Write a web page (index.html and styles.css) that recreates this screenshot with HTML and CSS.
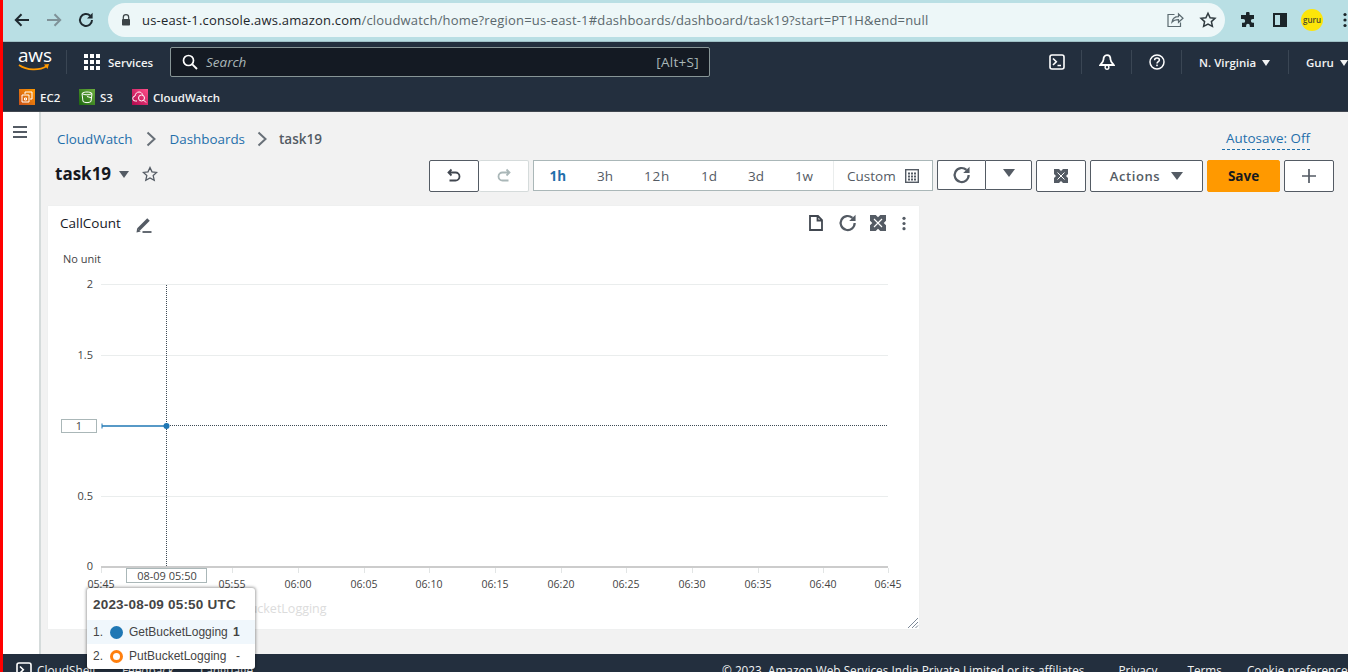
FILE: index.html
```html
<!DOCTYPE html>
<html lang="en">
<head>
<meta charset="utf-8">
<title>task19 | CloudWatch</title>
<link rel="stylesheet" href="styles.css">
</head>
<body>
<div class="browser">
  <header class="chrome">
    <svg class="ch-ic" viewBox="0 0 18 18"><path d="M16 9H3M8.500 3.200 2.800 9l5.700 5.800" fill="none" stroke="#1f2a30" stroke-width="2"/></svg>
    <svg class="ch-ic" viewBox="0 0 18 18"><path d="M2 9h13M9.500 3.200 15.200 9l-5.700 5.800" fill="none" stroke="#7f9298" stroke-width="2"/></svg>
    <svg class="ch-ic" viewBox="0 0 18 18"><path d="M15 9a6 6 0 1 1-1.800-4.300" fill="none" stroke="#1f2a30" stroke-width="2"/><path d="M15.600 1.800v5.600H10z" fill="#1f2a30"/></svg>
    <div class="omnibox">
      <svg class="lock" viewBox="0 0 10 12"><path d="M2.300 5V3.400a2.700 2.700 0 0 1 5.400 0V5" fill="none" stroke="#3c4447" stroke-width="1.200"/><rect x="1" y="5" width="8" height="6.600" rx=".8" fill="#3c4447"/></svg>
      <span class="url"><span class="url-host">us-east-1.console.aws.amazon.com</span>/cloudwatch/home?region=us-east-1#dashboards/dashboard/task19?start=PT1H&amp;end=null</span>
      <svg class="omni-ic" viewBox="0 0 18 18"><path d="M8.500 3.500H2v12h12.500v-4M6 11c.6-3.500 3-5.300 6.500-5.300V3l4.500 4.200-4.500 4.100V8.700C9.500 8.700 7.500 9.300 6 11z" fill="none" stroke="#5b6a70" stroke-width="1.200"/></svg>
      <svg class="omni-ic star" viewBox="0 0 18 18"><path d="m9 2.200 2.100 4.500 4.900.6-3.600 3.300 1 4.800L9 13l-4.400 2.400 1-4.800L2 7.300l4.900-.6z" fill="none" stroke="#2f3a3f" stroke-width="1.500"/></svg>
    </div>
    <svg class="ext" viewBox="0 0 16 16"><path d="M6 1.500a1.800 1.800 0 0 1 3.600 0V3H14v4h-1.300a1.800 1.800 0 0 0 0 3.700H14V15H9.800v-1.300a1.800 1.800 0 0 0-3.700 0V15H2v-4.200h1.300a1.800 1.800 0 0 0 0-3.700H1V3h5z" fill="#1b2529"/></svg>
    <svg class="side" viewBox="0 0 14 14"><rect x="1" y="1" width="12" height="12" fill="none" stroke="#1b2529" stroke-width="2"/><rect x="7" y="1" width="6" height="12" fill="#1b2529"/></svg>
    <div class="avatar">guru</div>
    <svg class="kebab" viewBox="0 0 4 16"><circle cx="2" cy="2.500" r="1.600"/><circle cx="2" cy="8" r="1.600"/><circle cx="2" cy="13.500" r="1.600"/></svg>
  </header>

  <nav class="aws-nav">
    <div class="nav-top">
      <div class="logo">
        <span class="logo-text">aws</span>
        <svg class="smile" viewBox="0 0 32 8"><path d="M1 1c8 5.500 20 6 28 1" fill="none" stroke="#f90" stroke-width="1.800"/><path d="m26 .6 5-.6-1.500 5z" fill="#f90"/></svg>
      </div>
      <span class="nav-sep sep-logo"></span>
      <svg class="grid-ic" viewBox="0 0 16 16" fill="#fff"><rect width="4" height="4"/><rect x="6" width="4" height="4"/><rect x="12" width="4" height="4"/><rect y="6" width="4" height="4"/><rect x="6" y="6" width="4" height="4"/><rect x="12" y="6" width="4" height="4"/><rect y="12" width="4" height="4"/><rect x="6" y="12" width="4" height="4"/><rect x="12" y="12" width="4" height="4"/></svg>
      <span class="services">Services</span>
      <div class="search">
        <svg class="search-ic" viewBox="0 0 16 16"><circle cx="6.500" cy="6.500" r="5" fill="none" stroke="#fff" stroke-width="1.700"/><path d="m10.300 10.300 4.700 4.700" stroke="#fff" stroke-width="1.900"/></svg>
        <span class="search-ph">Search</span>
        <span class="search-key">[Alt+S]</span>
      </div>
      <div class="nav-right">
        <svg class="nav-ic" viewBox="0 0 16 16"><rect x="1" y="1" width="14" height="14" rx="2" fill="none" stroke="#fff" stroke-width="1.600"/><path d="m4 4.500 3.300 3.300L4 11M8.500 11.500H12" fill="none" stroke="#fff" stroke-width="1.600"/></svg>
        <span class="nav-sep"></span>
        <svg class="nav-ic" viewBox="0 0 16 16"><path d="M8 1.200c2.500 0 3.500 2 3.500 4.300 0 2 2.500 4.500 3.200 5.500H1.300C2 10 4.500 7.500 4.500 5.500 4.500 3.200 5.500 1.200 8 1.200z" fill="none" stroke="#fff" stroke-width="1.800"/><circle cx="8" cy="13.300" r="1.900" fill="none" stroke="#fff" stroke-width="1.400"/></svg>
        <span class="nav-sep"></span>
        <svg class="nav-ic" viewBox="0 0 16 16"><circle cx="8" cy="8" r="7" fill="none" stroke="#fff" stroke-width="1.500"/><path d="M5.600 6.200C5.600 4.700 6.800 4 8 4c1.400 0 2.400.8 2.400 2 0 1.700-2.400 1.700-2.400 3.600" fill="none" stroke="#fff" stroke-width="1.500"/><rect x="7.200" y="10.600" width="1.600" height="1.600" fill="#fff"/></svg>
        <span class="nav-sep"></span>
        <span class="region">N. Virginia<i class="caret-w"></i></span>
        <span class="nav-sep"></span>
        <span class="user">Guru<i class="caret-w"></i></span>
      </div>
    </div>
    <div class="favs">
      <span class="fav fav-ec2"><span class="svc svc-ec2"><svg viewBox="0 0 16 16"><path d="M6 5V3h7v7h-2M3 6h7v7H3zM5.500 9h2v2h-2z" fill="none" stroke="#fff" stroke-width="1"/></svg></span>EC2</span>
      <span class="fav fav-s3"><span class="svc svc-s3"><svg viewBox="0 0 16 16"><path d="M3 4.500c2-2 8-2 10 0l-1 8c-2 1.500-6 1.500-8 0zM3 4.500c2 1.800 8 1.800 10 0M8 7.500l5 1.500" fill="none" stroke="#fff" stroke-width="1"/></svg></span>S3</span>
      <span class="fav"><span class="svc svc-cw"><svg viewBox="0 0 16 16"><path d="M5 12H3.500a2.500 2.500 0 0 1-.5-5c.3-2.500 2-4 4-4 1.800 0 3 1 3.700 2.700" fill="none" stroke="#fff" stroke-width="1"/><circle cx="9.500" cy="9" r="3" fill="none" stroke="#fff"/><path d="m11.700 11.200 2.300 2.300" stroke="#fff"/></svg></span>CloudWatch</span>
    </div>
  </nav>

  <div class="app">
    <aside class="sidebar">
      <span class="burger"><i></i><i></i><i></i></span>
    </aside>
    <main class="content">
      <div class="crumbs">
        <a class="crumb">CloudWatch</a>
        <svg class="chev" viewBox="0 0 10 16"><path d="m1.500 1.500 7 6.500-7 6.500" fill="none" stroke="#687078" stroke-width="2"/></svg>
        <a class="crumb">Dashboards</a>
        <svg class="chev chev-last" viewBox="0 0 10 16"><path d="m1.500 1.500 7 6.500-7 6.500" fill="none" stroke="#687078" stroke-width="2"/></svg>
        <span class="crumb-cur">task19</span>
        <a class="autosave">Autosave: Off</a>
      </div>
      <div class="toolbar">
        <div class="title-group">
          <h1 class="dash-title">task19</h1>
          <i class="caret-g title-caret"></i>
          <svg class="fav-star" viewBox="0 0 16 16"><path d="m8 1.500 2 4.300 4.700.6-3.500 3.200 1 4.600L8 11.900l-4.200 2.300 1-4.600L1.300 6.400 6 5.800z" fill="none" stroke="#545b64" stroke-width="1.300"/></svg>
        </div>
        <div class="tools">
          <button class="btn b-undo"><svg class="ic16" viewBox="0 0 16 16"><path d="M5.500 1.500 2.500 4.500l3 3M3 4.500h6.500a4 4 0 0 1 0 8H3.500" fill="none" stroke="#414750" stroke-width="1.800"/></svg></button>
          <button class="btn b-redo"><svg class="ic16" viewBox="0 0 16 16"><path d="m10.500 1.500 3 3-3 3M13 4.500H6.500a4 4 0 0 0 0 8h6" fill="none" stroke="#aab7b8" stroke-width="1.800"/></svg></button>
          <div class="range">
            <span class="r r-on">1h</span><span class="r">3h</span><span class="r r-12">12h</span><span class="r">1d</span><span class="r">3d</span><span class="r">1w</span>
            <span class="r-custom">Custom
              <svg class="cal" viewBox="0 0 14 14"><rect x=".7" y=".7" width="12.600" height="12.600" fill="none" stroke="#545b64" stroke-width="1.400"/><path d="M3 3.500h2v2H3zM6 3.500h2v2H6zM9 3.500h2v2H9zM3 6.500h2v2H3zM6 6.500h2v2H6zM9 6.500h2v2H9zM3 9.500h2v2H3zM6 9.500h2v2H6zM9 9.500h2v2H9z" fill="#545b64"/></svg>
            </span>
          </div>
          <div class="split">
            <button class="btn b-ref"><svg class="ic20" viewBox="0 0 18 18"><path d="M15 9a6.300 6.300 0 1 1-2-4.600" fill="none" stroke="#545b64" stroke-width="2"/><path d="M15.800 1.500v5.700h-5.700z" fill="#545b64"/></svg></button>
            <button class="btn b-drop"><i class="caret-g"></i></button>
          </div>
          <button class="btn b-full"><svg class="ic14" viewBox="0 0 14 14"><path d="M0 0h14v14H0z" fill="#545b64"/><path d="M3.500 3.500l7 7M10.500 3.500l-7 7" stroke="#fff" stroke-width="1"/><path d="M5 0h4L7 2zM5 14h4l-2-2zM0 5v4l2-2zM14 5v4l-2-2z" fill="#fff"/></svg></button>
          <button class="btn b-act">Actions<i class="caret-g"></i></button>
          <button class="btn b-save">Save</button>
          <button class="btn b-add"><svg class="ic16" viewBox="0 0 16 16"><path d="M8 1v14M1 8h14" stroke="#545b64" stroke-width="1.700"/></svg></button>
        </div>
      </div>
      <section class="widget">
        <div class="w-head">
          <span class="w-title">CallCount</span>
          <svg class="pencil" viewBox="0 0 16 16"><path d="M2.500 12.500 12.500 2.500" stroke="#545b64" stroke-width="3.600"/><path d="M.5 15.500 1.200 11l3.500 3.500z" fill="#545b64"/><path d="M6.500 15h9" stroke="#545b64" stroke-width="1.800"/></svg>
          <div class="w-tools">
            <svg class="w-ic w-file" viewBox="0 0 14 16"><path d="M1 1h8l4 4v10H1zM8.500 1v4.500H13" fill="none" stroke="#414750" stroke-width="1.800"/></svg>
            <svg class="w-ic w-ref" viewBox="0 0 18 18"><path d="M15 9a6.300 6.300 0 1 1-2-4.600" fill="none" stroke="#545b64" stroke-width="2"/><path d="M15.800 1.500v5.700h-5.700z" fill="#545b64"/></svg>
            <svg class="w-ic" viewBox="0 0 14 14"><path d="M0 0h14v14H0z" fill="#545b64"/><path d="M3.500 3.500l7 7M10.500 3.500l-7 7" stroke="#fff" stroke-width="1"/><path d="M5 0h4L7 2zM5 14h4l-2-2zM0 5v4l2-2zM14 5v4l-2-2z" fill="#fff"/></svg>
            <svg class="w-kebab" viewBox="0 0 4 16"><circle cx="2" cy="2.500" r="1.700"/><circle cx="2" cy="8" r="1.700"/><circle cx="2" cy="13.500" r="1.700"/></svg>
          </div>
        </div>
        <svg class="chart" viewBox="48 245 871 384">
          <text x="63" y="263" class="unit">No unit</text>
          <g class="grid">
            <path d="M101 284.500H888M101 355.500H888M101 496.500H888"/>
          </g>
          <g class="ylab">
            <text x="93" y="288">2</text><text x="93" y="359">1.5</text><text x="93" y="500">0.5</text><text x="93" y="570">0</text>
          </g>
          <path class="axis" d="M101 567H888"/>
          <path class="ticks" d="M101.500 568v5M166.500 568v5M232.500 568v5M298.500 568v5M364.500 568v5M429.500 568v5M495.500 568v5M561.500 568v5M626.500 568v5M692.500 568v5M758.500 568v5M823.500 568v5M888.500 568v5"/>
          <g class="xlab">
            <text x="101" y="588">05:45</text><text x="232" y="588">05:55</text><text x="298" y="588">06:00</text><text x="364" y="588">06:05</text><text x="429" y="588">06:10</text><text x="495" y="588">06:15</text><text x="561" y="588">06:20</text><text x="626" y="588">06:25</text><text x="692" y="588">06:30</text><text x="758" y="588">06:35</text><text x="823" y="588">06:40</text><text x="888" y="588">06:45</text>
          </g>
          <text x="221" y="613" class="legend">GetBucketLogging</text>
          <path class="dots" d="M166.500 285V567M166 425.500H888"/>
          <path class="series" d="M102 426H166"/>
          <path class="series-end" d="M102 423.500v5"/>
          <circle cx="166.500" cy="426" r="3" fill="#1f77b4"/>
          <rect class="tag" x="61.500" y="419.500" width="35" height="13"/>
          <text x="79" y="430" class="tag-t">1</text>
          <rect class="tag" x="126.500" y="568.500" width="80" height="14"/>
          <text x="167" y="580" class="tag-t">08-09 05:50</text>
          <path class="grip" d="M908 628l10-10M912 628l6-6M915.500 628l2.500-2.500"/>
        </svg>
      </section>
    </main>
  </div>

  <footer class="footer">
    <svg class="foot-ic" viewBox="0 0 16 16"><rect x="1" y="1" width="14" height="14" rx="2" fill="none" stroke="#fff" stroke-width="1.600"/><path d="m4 4.500 3.300 3.300L4 11" fill="none" stroke="#fff" stroke-width="1.600"/></svg>
    <span class="f-shell">CloudShell</span>
    <span class="f-feed">Feedback</span>
    <span class="f-lang">Language</span>
    <span class="f-copy">© 2023, Amazon Web Services India Private Limited or its affiliates.</span>
    <span class="f-priv">Privacy</span>
    <span class="f-terms">Terms</span>
    <span class="f-cook">Cookie preferences</span>
  </footer>

  <div class="tip">
    <div class="tip-title">2023-08-09 05:50 UTC</div>
    <div class="tip-row tip-on"><span class="tip-n">1.</span><i class="dot dot-b"></i><span class="tip-name">GetBucketLogging</span><b class="tip-v">1</b></div>
    <div class="tip-row"><span class="tip-n">2.</span><i class="dot dot-o"></i><span class="tip-name">PutBucketLogging</span><span class="tip-d">-</span></div>
  </div>
</div>
</body>
</html>
```

FILE: styles.css
```css
* { box-sizing: border-box; }
html, body { margin: 0; height: 672px; overflow: hidden; }
body { background: #f2f2f2; font-family: "Open Sans", "Liberation Sans", sans-serif; }

.browser {
  position: relative;
  width: 1348px;
  height: 672px;
  overflow: hidden;
  border-left: 3px solid #f00;
  display: flex;
  flex-direction: column;
}

/* browser chrome */
.chrome {
  height: 42px;
  flex: none;
  background: #b9dfe4;
  border-bottom: 1px solid #9fc0c6;
  display: flex;
  align-items: center;
  padding: 0 0 1px 10px;
}
.ch-ic { width: 18px; height: 18px; margin-right: 14px; }
.omnibox {
  width: 1117px;
  height: 34px;
  margin-left: -1px;
  background: #edf7f8;
  border-radius: 17px;
  display: flex;
  align-items: center;
  padding-left: 13px;
}
.lock { width: 10px; height: 12px; margin-right: 11px; }
.url { font-size: 13px; color: #5b686d; flex: 1; letter-spacing: .185px; white-space: nowrap; }
.url-host { color: #1d262a; }
.omni-ic { width: 18px; height: 18px; margin-right: 15px; }
.star { margin-right: 8px; }
.ext { width: 16px; height: 16px; margin-left: 15px; }
.side { width: 14px; height: 14px; margin-left: 17px; }
.avatar {
  width: 22px; height: 22px; margin-left: 14px;
  border-radius: 50%;
  background: #fde50a;
  color: #4a4a2a;
  font-size: 8px;
  font-weight: 600;
  line-height: 22px;
  text-align: center;
}
.kebab { width: 4px; height: 16px; margin-left: 20px; fill: #1b2529; }

/* aws nav */
.aws-nav { height: 70px; flex: none; background: #232f3e; color: #fff; border-bottom: 1px solid #414750; }
.nav-top { height: 40px; display: flex; align-items: center; padding-left: 15px; }
.logo { width: 32px; height: 28px; position: relative; }
.logo-text { display: block; font-size: 19px; line-height: 20px; letter-spacing: -.2px; text-align: center; margin-top: -3px; }
.smile { position: absolute; left: 0; top: 16px; width: 32px; height: 8px; }
.nav-sep { display: block; width: 1px; height: 24px; background: #3a4654; }
.sep-logo { margin-left: 16px; }
.grid-ic { width: 16px; height: 16px; margin-left: 17px; }
.services { font-size: 11.500px; font-weight: 600; margin-left: 8px; width: 62px; color: #f2f3f3; }
.search {
  width: 540px; height: 30px;
  background: #141a23;
  border: 1px solid #879596;
  border-radius: 2px;
  display: flex; align-items: center;
  padding: 0 10px 0 11px;
}
.search-ic { width: 16px; height: 16px; }
.search-ph { font-size: 13.500px; font-style: italic; color: #aab7b8; margin-left: 8px; flex: 1; }
.search-key { font-size: 13.500px; color: #aab7b8; letter-spacing: .3px; }
.nav-right { display: flex; align-items: center; margin-left: 339px; }
.nav-ic { width: 16px; height: 16px; }
.nav-right .nav-sep { margin: 0 17px 0 16px; }
.region { font-size: 11.500px; font-weight: 600; width: 73px; white-space: nowrap; color: #f2f3f3; }
.user { font-size: 11.500px; font-weight: 600; white-space: nowrap; color: #f2f3f3; }
.caret-w { display: inline-block; margin-left: 6px; border: 4.500px solid transparent; border-top: 6px solid #f2f3f3; border-bottom: 0; vertical-align: 1px; }

.favs { display: flex; align-items: center; height: 29px; padding: 1px 0 0 16px; font-size: 11.500px; font-weight: 600; color: #f2f3f3; }
.fav { display: flex; align-items: center; gap: 5px; }
.fav-ec2 { width: 60px; }
.fav-s3 { width: 53px; }
.svc { width: 16px; height: 16px; display: block; }
.svc svg { display: block; width: 16px; height: 16px; }
.svc-ec2 { background: linear-gradient(45deg, #c8511b, #ff9900); }
.svc-s3 { background: linear-gradient(45deg, #1b660f, #6cae3e); }
.svc-cw { background: linear-gradient(45deg, #b0084d, #ff4f8b); }

/* app */
.app { flex: 1; display: flex; min-height: 0; }
.sidebar { width: 38px; flex: none; background: #fff; border-right: 2px solid #d5dbdb; padding: 14px 0 0 10px; }
.burger { display: flex; flex-direction: column; gap: 3px; width: 14px; }
.burger i { display: block; height: 2px; background: #545b64; }
.content { flex: 1; min-width: 0; padding: 0 14px 0 7px; }

.crumbs { display: flex; align-items: center; height: 22px; margin-top: 16px; padding-left: 9px; font-size: 13.400px; }
.crumb { color: #1f6fab; }
.chev { width: 10px; height: 16px; margin: 0 13px 0 14px; }
.chev-last { margin: 0 12px; }
.crumb-cur { color: #545b64; font-weight: 600; font-size: 13.500px; }
.autosave {
  margin-left: auto;
  margin-right: 24px;
  padding: 0 0 0 4px;
  height: 22px;
  line-height: 21px;
  color: #1f6fab;
  border-bottom: 1px dashed #1f6fab;
}

.toolbar { display: flex; align-items: center; height: 32px; margin-top: 10px; padding-left: 7px; }
.title-group { display: flex; align-items: center; margin-top: -4px; }
.dash-title { margin: 0; font-size: 17px; font-weight: 700; color: #16191f; line-height: 32px; }
.caret-g { display: inline-block; border: 6px solid transparent; border-top: 8px solid #545b64; border-bottom: 0; }
.title-caret { margin-left: 8px; border-width: 7px 5.500px 0; border-top-color: #545b64; }
.fav-star { width: 16px; height: 16px; margin-left: 13px; }
.tools { margin-left: auto; display: flex; align-items: flex-start; height: 32px; }
.btn {
  display: flex; align-items: center; justify-content: center;
  background: #fff;
  border: 1px solid #545b64;
  border-radius: 2px;
  padding: 0;
  height: 32px;
  font-family: inherit;
}
.ic16 { width: 16px; height: 16px; }
.ic20 { width: 20px; height: 20px; }
.ic14 { width: 14px; height: 14px; }
.b-undo { width: 50px; }
.b-redo { width: 50px; border-color: #d5dbdb; border-left: 0; }
.range {
  width: 400px; height: 31px; margin-left: 4px;
  background: #fff;
  border: 1px solid #aab7b8;
  display: flex; align-items: center;
  font-size: 13.500px; color: #545b64;
}
.r { padding: 0 15.500px; }
.r-12 { letter-spacing: .7px; }
.r-on { color: #1f6fab; font-weight: 700; }
.r-custom { margin-left: auto; width: 99px; height: 100%; border-left: 1px solid #eaeded; display: flex; align-items: center; padding-left: 13px; gap: 9px; }
.cal { width: 14px; height: 14px; }
.split { display: flex; margin-left: 4px; }
.b-ref { width: 48px; height: 30px; border-right: 0; border-radius: 2px 0 0 2px; }
.b-drop { width: 47px; height: 30px; border-radius: 0 2px 2px 0; }
.b-drop .caret-g { border-width: 8px 6px 0; margin-top: -4px; }
.b-full { width: 50px; margin-left: 4px; }
.b-act { width: 113px; margin-left: 4px; font-size: 13px; font-weight: 600; color: #545b64; gap: 11px; letter-spacing: .6px; }
.b-save { width: 73px; margin-left: 4px; background: #f90; border-color: #f90; font-size: 13.500px; font-weight: 700; color: #16191f; }
.b-add { width: 50px; margin-left: 4px; }

/* widget */
.widget {
  width: 871px;
  height: 423px;
  margin-top: 14px;
  background: #fff;
  box-shadow: 0 0 1px #dfe3e3;
}
.w-head { display: flex; align-items: center; height: 39px; padding: 0 13px 5px 12px; }
.w-title { font-size: 13.500px; color: #16191f; }
.pencil { width: 16px; height: 16px; margin-left: 15px; margin-top: 4px; }
.w-tools { margin-left: auto; display: flex; align-items: center; }
.w-ic { width: 16px; height: 16px; margin-right: 14px; }
.w-file { margin-right: 16px; }
.w-ref { width: 20px; height: 20px; margin-left: -2px; margin-right: 12px; }
.w-kebab { width: 4px; height: 15px; fill: #545b64; margin-left: 2px; }
.chart { display: block; width: 871px; height: 384px; font-family: "Open Sans", "Liberation Sans", sans-serif; }
.unit { font-size: 11px; fill: #444; }
.grid path { stroke: #eaeded; fill: none; }
.ylab text { font-size: 11px; fill: #444; text-anchor: end; }
.xlab text { font-size: 10.500px; fill: #444; text-anchor: middle; }
.axis { stroke: #ccc; stroke-width: 2; }
.ticks { stroke: #e2e5e5; }
.legend { font-size: 12.500px; fill: #dcdcdc; text-anchor: start; }
.dots { stroke: #3d4a55; stroke-dasharray: 1 1; fill: none; }
.series { stroke: #1f77b4; stroke-width: 1.600; fill: none; }
.series-end { stroke: #1f77b4; fill: none; }
.tag { fill: #fff; stroke: #aab7b8; }
.tag-t { font-size: 11px; fill: #444; text-anchor: middle; }
.grip { stroke: #7d8998; fill: none; }

/* footer */
.footer {
  height: 18px; flex: none;
  background: #232f3e;
  color: #f2f3f3;
  display: flex; align-items: flex-start;
  font-size: 11.800px;
  line-height: 16px;
  padding: 8px 0 0 13px;
  overflow: hidden;
  white-space: nowrap;
}
.footer span { flex: none; }
.foot-ic { width: 16px; height: 16px; flex: none; margin-right: 5px; }
.f-shell { width: 85px; }
.f-feed { width: 78px; }
.f-lang { width: 522px; }
.f-priv { margin-left: 31px; }
.f-terms { margin-left: 30px; }
.f-cook { margin-left: 25px; }

/* tooltip */
.tip {
  position: absolute;
  left: 84px; top: 588px;
  width: 168px; height: 81px;
  background: #fff;
  border-radius: 3px;
  box-shadow: 0 0 3px 1px rgba(0, 0, 0, .35);
  font-family: "Liberation Sans", Arial, sans-serif;
  font-size: 12px;
  color: #444;
}
.tip-title { height: 32px; padding: 9px 0 0 6px; font-size: 13.500px; font-weight: 700; letter-spacing: .2px; line-height: 15px; white-space: nowrap; }
.tip-row { display: flex; align-items: center; height: 24px; padding-left: 6px; }
.tip-on { background: #f0f7fc; }
.tip-n { width: 17px; }
.dot { width: 13px; height: 13px; border-radius: 50%; flex: none; }
.dot-b { background: #1f77b4; }
.dot-o { border: 3px solid #ff7f0e; }
.tip-name { margin-left: 6px; width: 104px; }
.tip-d { margin-left: 3px; }
```
